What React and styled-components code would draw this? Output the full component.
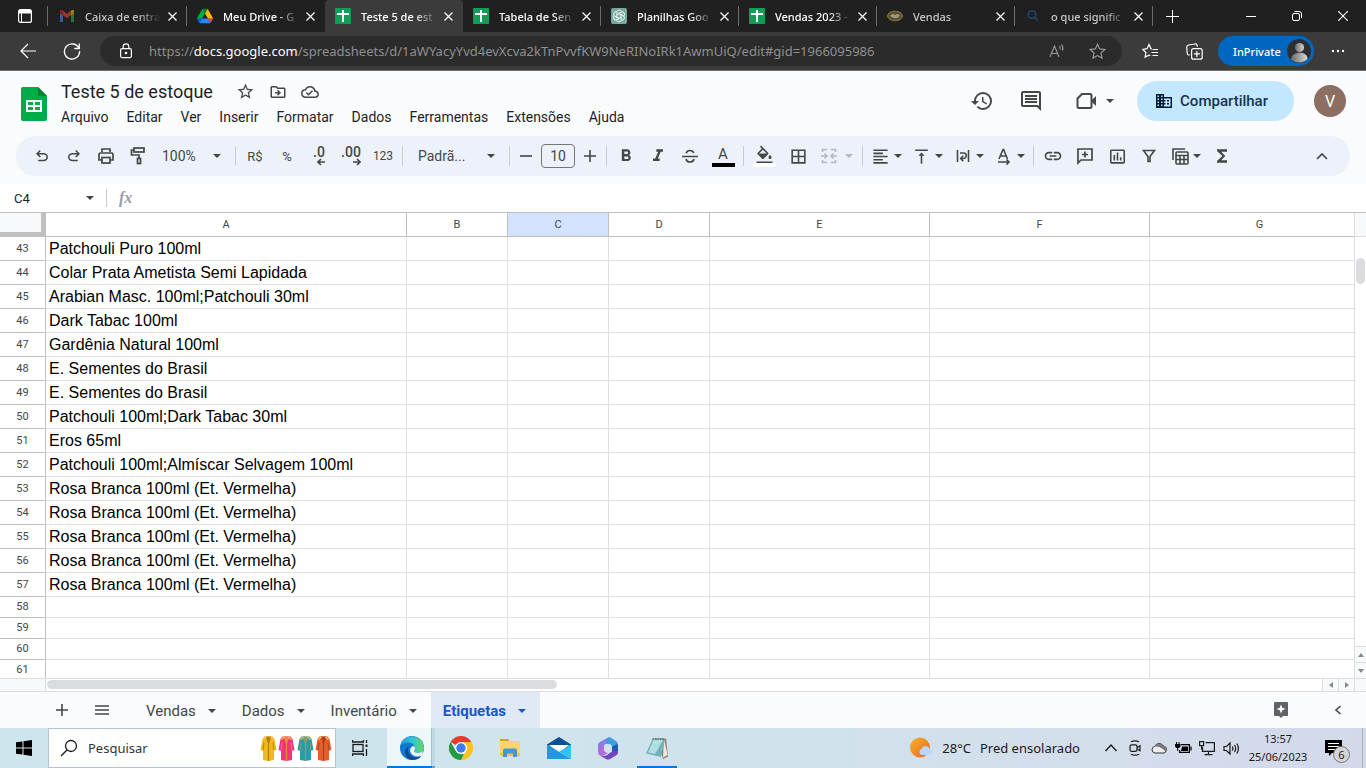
import React from 'react';
import styled, { createGlobalStyle, css } from 'styled-components';
// icons
import {
  MdStarBorder, MdOutlineDriveFileMove, MdOutlineCloudDone, MdHistory, MdOutlineComment,
  MdBorderAll, MdFormatAlignLeft, MdVerticalAlignTop, MdLink, MdInsertChartOutlined,
  MdFunctions, MdFormatBold, MdFormatItalic, MdFormatColorFill,
} from 'react-icons/md';

const GlobalStyle = createGlobalStyle`
* {
  box-sizing: border-box;
}
body {
  margin: 0;
  overflow: hidden;
  background: #fff;
  font-family: Roboto, "Liberation Sans", sans-serif;
}
button, input, select {
  font-family: inherit;
  color: inherit;
  border: 0;
  margin: 0;
  padding: 0;
  background: none;
  outline: none;
}
svg {
  display: block;
  flex: none;
}
`;

// data
const tabs = [
  { title: 'Caixa de entra', icon: 'gmail', dim: true },
  { title: 'Meu Drive - G', icon: 'drive' },
  { title: 'Teste 5 de est', icon: 'sheets', active: true },
  { title: 'Tabela de Sen', icon: 'sheets' },
  { title: 'Planilhas Goo', icon: 'gpt' },
  { title: 'Vendas 2023 -', icon: 'sheets' },
  { title: 'Vendas', icon: 'coin', dim: true },
  { title: 'o que signific', icon: 'bing', dim: true },
];

const menus = ['Arquivo', 'Editar', 'Ver', 'Inserir', 'Formatar', 'Dados', 'Ferramentas', 'Extensões', 'Ajuda'];

const columns = [
  { name: 'A', width: 361 },
  { name: 'B', width: 101 },
  { name: 'C', width: 101 },
  { name: 'D', width: 101 },
  { name: 'E', width: 220 },
  { name: 'F', width: 220 },
  { name: 'G', width: 220 },
];

const products = [
  'Patchouli Puro 100ml',
  'Colar Prata Ametista Semi Lapidada',
  'Arabian Masc. 100ml;Patchouli 30ml',
  'Dark Tabac 100ml',
  'Gardênia Natural 100ml',
  'E. Sementes do Brasil',
  'E. Sementes do Brasil',
  'Patchouli 100ml;Dark Tabac 30ml',
  'Eros 65ml',
  'Patchouli 100ml;Almíscar Selvagem 100ml',
  'Rosa Branca 100ml (Et. Vermelha)',
  'Rosa Branca 100ml (Et. Vermelha)',
  'Rosa Branca 100ml (Et. Vermelha)',
  'Rosa Branca 100ml (Et. Vermelha)',
  'Rosa Branca 100ml (Et. Vermelha)',
  '', '', '', '',
];

const sheets = ['Vendas', 'Dados', 'Inventário', 'Etiquetas'];

// small drawings
const Arrow = () => (
  <svg width="8" height="4" viewBox="0 0 8 4"><path d="M0 0h8L4 4z" fill="currentColor" /></svg>
);

const Symbol = ({ d, size = 20 }) => (
  <svg width={size} height={size} viewBox="0 -960 960 960" fill="currentColor"><path d={d} /></svg>
);

const Line = ({ size = 20, box = 20, width = 2, children }) => (
  <svg width={size} height={size} viewBox={`0 0 ${box} ${box}`} fill="none" stroke="currentColor" strokeWidth={width}>
    {children}
  </svg>
);

const Close = () => (
  <Line size={9} box={9} width={1.2}><path d="M.5.5l8 8M8.5.5l-8 8" /></Line>
);

const Favicon = ({ name }) => {
  switch (name) {
    case 'gmail':
      return (
        <svg width="16" height="16" viewBox="0 0 16 16" opacity="0.6">
          <path d="M1 3.5V14h3V7z" fill="#4285f4" />
          <path d="M15 3.5V14h-3V7z" fill="#34a853" />
          <path d="M1 3.5c0-1.500 1.500-2 2.500-1.200L8 5.700l4.500-3.400C13.500 1.500 15 2 15 3.500V5L8 10.200 1 5z" fill="#ea4335" />
          <path d="M12 2.700v4.700l3-2.300V3.400c0-1.400-1.800-1.800-3-.7z" fill="#fbbc04" />
          <path d="M4 2.700v4.700L1 5.100V3.400C1 2 2.800 1.600 4 2.700z" fill="#c5221f" />
        </svg>
      );
    case 'drive':
      return (
        <svg width="16" height="16" viewBox="0 0 87.300 78">
          <path d="m6.600 66.850 3.850 6.650c.8 1.400 1.950 2.500 3.300 3.300l13.750-23.800h-27.500c0 1.550.4 3.100 1.200 4.500z" fill="#0066da" />
          <path d="m43.650 25-13.750-23.800c-1.350.8-2.500 1.900-3.300 3.300l-25.400 44a9.060 9.060 0 0 0 -1.200 4.500h27.500z" fill="#00ac47" />
          <path d="m73.550 76.800c1.350-.8 2.500-1.900 3.300-3.300l1.600-2.750 7.650-13.250c.8-1.400 1.200-2.950 1.200-4.500h-27.500l5.850 11.500z" fill="#ea4335" />
          <path d="m43.650 25 13.750-23.800c-1.350-.8-2.900-1.200-4.500-1.200h-18.500c-1.600 0-3.150.45-4.500 1.200z" fill="#00832d" />
          <path d="m59.800 53h-32.300l-13.750 23.800c1.350.8 2.900 1.200 4.500 1.200h50.800c1.600 0 3.150-.45 4.500-1.200z" fill="#2684fc" />
          <path d="m73.400 26.500-12.700-22c-.8-1.400-1.950-2.500-3.300-3.300l-13.750 23.800 16.150 28h27.450c0-1.550-.4-3.100-1.200-4.500z" fill="#ffba00" />
        </svg>
      );
    case 'sheets':
      return (
        <svg width="16" height="16" viewBox="0 0 16 16">
          <rect width="16" height="16" rx="1" fill="#0f9d58" />
          <path d="M7 2h2v3h5v2H9v7H7V7H2V5h5z" fill="#fff" />
        </svg>
      );
    case 'gpt':
      return (
        <svg width="16" height="16" viewBox="0 0 16 16">
          <rect width="16" height="16" rx="2" fill="#75a99c" />
          <g fill="none" stroke="#fff" strokeWidth="0.9">
            {[0, 60, 120, 180, 240, 300].map((a) => (
              <path key={a} transform={`rotate(${a} 8 8)`} d="M8 5.600L5.800 6.900V4.300C5.800 1.800 9.500 1.300 10.300 3.600" />
            ))}
          </g>
        </svg>
      );
    case 'coin':
      return (
        <svg width="16" height="16" viewBox="0 0 16 16">
          <ellipse cx="8" cy="8" rx="7.500" ry="4.800" fill="#5c5230" stroke="#8a7b35" />
          <path d="M3 7.500l3-1.500 2 1 3-1 2 1.500-2 2-3 .8-3-1z" fill="#9b9a90" />
        </svg>
      );
    default:
      return (
        <svg width="16" height="16" viewBox="0 0 16 16" fill="none" stroke="#1b4874" strokeWidth="1.600">
          <circle cx="7" cy="6.500" r="3.700" />
          <path d="M9.700 9.200L13 12.800" />
        </svg>
      );
  }
};

const UNDO = 'M280-200v-80h284q63 0 109.500-40T720-420q0-60-46.500-100T564-560H312l104 104-56 56-200-200 200-200 56 56-104 104h252q97 0 166.500 63T800-420q0 94-69.500 157T564-200H280Z';
const REDO = 'M396-200q-97 0-166.500-63T160-420q0-94 69.500-157T396-640h252L544-744l56-56 200 200-200 200-56-56 104-104H396q-63 0-109.500 40T240-420q0 60 46.500 100T396-280h284v80H396Z';

function App() {
  return (
    <Page>
      <GlobalStyle />
      <BrowserTabs />
      <AddressBar />
      <DocHeader />
      <Toolbar />
      <FormulaBar />
      <Grid />
      <SheetTabs />
      <Taskbar />
    </Page>
  );
}

function BrowserTabs() {
  return (
    <TabStrip>
      <TabMenu aria-label="Menu de guias">
        <svg width="14" height="14" viewBox="0 0 14 14">
          <rect x="0.600" y="0.600" width="12.800" height="12.800" rx="2" fill="none" stroke="#fff" strokeWidth="1.200" />
          <path d="M1 1h12v3.500H1z" fill="#fff" />
          <path d="M3.500 4v9" stroke="#fff" strokeWidth="1" />
        </svg>
      </TabMenu>
      {tabs.map((tab, i) => (
        <Tab key={tab.title} $active={tab.active} $line={!tab.active && i !== 1}>
          <Favicon name={tab.icon} />
          <TabTitle $dim={tab.dim}>{tab.title}</TabTitle>
          <TabClose aria-label="Fechar guia"><Close /></TabClose>
        </Tab>
      ))}
      <NewTab aria-label="Nova guia">
        <Line size={13} box={13} width={1}><path d="M6.500 0v13M0 6.500h13" /></Line>
      </NewTab>
      <WindowButtons>
        <WindowButton aria-label="Minimizar">
          <Line size={10} box={10} width={1}><path d="M0 5.500h10" /></Line>
        </WindowButton>
        <WindowButton aria-label="Restaurar">
          <Line size={10} box={10} width={1}>
            <rect x="0.500" y="2.500" width="7" height="7" rx="1.500" />
            <path d="M2.500.5h4.500a2.500 2.500 0 0 1 2.500 2.500v4" />
          </Line>
        </WindowButton>
        <WindowButton aria-label="Fechar">
          <Line size={10} box={10} width={1.100}><path d="M0 0l10 10M10 0L0 10" /></Line>
        </WindowButton>
      </WindowButtons>
    </TabStrip>
  );
}

function AddressBar() {
  return (
    <NavBar>
      <NavButton aria-label="Voltar">
        <Line size={16} box={16} width={1.200}><path d="M16 8H1M8 1L1 8l7 7" /></Line>
      </NavButton>
      <NavButton aria-label="Atualizar">
        <Line size={18} box={18} width={1.300}><path d="M16 6.500A7.600 7.600 0 1 0 16.600 9M16.300 1.500v5h-5" /></Line>
      </NavButton>
      <Address>
        <Line size={16} box={16} width={1.200}>
          <rect x="2.600" y="5.600" width="10.800" height="9" rx="1.500" />
          <path d="M5.200 5.500V3.600a2.800 2.800 0 0 1 5.600 0v1.900" />
          <circle cx="8" cy="10" r="0.700" fill="currentColor" />
        </Line>
        <Url role="textbox" aria-label="Endereço">
          https://<b>docs.google.com</b>/spreadsheets/d/1aWYacyYvd4evXcva2kTnPvvfKW9NeRINoIRk1AwmUiQ/edit#gid=1966095986
        </Url>
        <AddressButton aria-label="Ler em voz alta">
          <Line size={16} box={16} width={1.100}>
            <path d="M1 14L5.500 3 10 14M2.600 10.500h5.800M10.300 3q1.400 1.500.7 3.500M12.500 1.500q2.200 2.800 1 6" />
          </Line>
        </AddressButton>
        <AddressButton aria-label="Adicionar aos favoritos">
          <Line size={17} box={17} width={1.100}>
            <path d="M8.500 1.200l2.200 4.700 5.100.6-3.800 3.500 1 5.100-4.500-2.500L4 15.100l1-5.100L1.200 6.500l5.100-.6z" />
          </Line>
        </AddressButton>
      </Address>
      <NavButton aria-label="Favoritos">
        <Line size={17} box={17} width={1.200}>
          <path d="M9.800 5.800H9L7 1.500 5 5.700l-4.300.7 3.200 3.100-.8 4.600 3.900-2 1.300.7M10.500 6.500H16M9.500 9.500H16M10.500 12.500H16" />
        </Line>
      </NavButton>
      <NavButton aria-label="Coleções">
        <Line size={17} box={17} width={1.200}>
          <rect x="5.600" y="5.600" width="10.600" height="10.600" rx="2" />
          <path d="M10.900 8v6M8 10.900h6M3.800 11.900L3 12a2 2 0 0 1-1.800-1.800L.8 4a2 2 0 0 1 1.700-2L9 1a2 2 0 0 1 2.200 1.600l.1 1.200" />
        </Line>
      </NavButton>
      <Private>
        InPrivate
        <svg width="24" height="24" viewBox="0 0 24 24">
          <defs>
            <linearGradient id="person" x1="0" x2="1">
              <stop offset="0" stopColor="#6b6b6b" />
              <stop offset="1" stopColor="#d9d5d2" />
            </linearGradient>
          </defs>
          <circle cx="12" cy="12" r="12" fill="#2f2f33" />
          <circle cx="12.500" cy="8.500" r="4.500" fill="url(#person)" />
          <path d="M4 20.500c0-9 17-9 16.500-.5a12 12 0 0 1-16.500.5z" fill="url(#person)" />
        </svg>
      </Private>
      <NavButton aria-label="Configurações e mais">
        <svg width="14" height="4" viewBox="0 0 14 4" fill="#fff">
          <circle cx="2" cy="2" r="1.200" /><circle cx="7" cy="2" r="1.200" /><circle cx="12" cy="2" r="1.200" />
        </svg>
      </NavButton>
    </NavBar>
  );
}

function DocHeader() {
  return (
    <Header>
      <svg width="26" height="34" viewBox="0 0 26 34">
        <path d="M2 0h15l9 9v23a2 2 0 0 1-2 2H2a2 2 0 0 1-2-2V2a2 2 0 0 1 2-2z" fill="#00ac47" />
        <path d="M17 0l9 9h-9z" fill="#00832d" />
        <path fillRule="evenodd" fill="#fff" d="M5 13h16v12H5zM7 15v3h5v-3zM14 15v3h5v-3zM7 20v3h5v-3zM14 20v3h5v-3z" />
      </svg>
      <TitleBlock>
        <TitleRow>
          <Title>Teste 5 de estoque</Title>
          <TitleButton aria-label="Marcar com estrela"><MdStarBorder size={19} /></TitleButton>
          <TitleButton aria-label="Mover"><MdOutlineDriveFileMove size={18} /></TitleButton>
          <TitleButton aria-label="Status do documento"><MdOutlineCloudDone size={18} /></TitleButton>
        </TitleRow>
        <Menus>
          {menus.map((menu) => <MenuButton key={menu}>{menu}</MenuButton>)}
        </Menus>
      </TitleBlock>
      <Actions>
        <ActionButton aria-label="Histórico de versões"><MdHistory size={24} /></ActionButton>
        <ActionButton aria-label="Comentários"><MdOutlineComment size={24} /></ActionButton>
        <ActionButton aria-label="Participar de uma chamada" $wide>
          <svg width="24" height="24" viewBox="0 0 24 24">
            <path d="M8 5h8a1.500 1.500 0 0 1 1.500 1.500v11A1.500 1.500 0 0 1 16 19H5a1.500 1.500 0 0 1-1.500-1.500v-8z" fill="none" stroke="#444746" strokeWidth="2" strokeLinejoin="round" />
            <path d="M18 11l4-4v10l-4-4z" fill="#444746" />
          </svg>
          <Arrow />
        </ActionButton>
        <Share>
          <svg width="16" height="14" viewBox="0 0 16 14">
            <path fillRule="evenodd" fill="#001d35" d="M0 0h8v3h8v11H0zM1.500 1.500v1.500H3V1.500zM5 1.500v1.500h1.500V1.500zM1.500 4.500V6H3V4.500zM5 4.500V6h1.500V4.500zM1.500 7.500V9H3V7.500zM5 7.500V9h1.500V7.500zM1.500 10.500V12H3v-1.500zM5 10.500V12h1.500v-1.500zM8 4.500V6h1.500v1.500H8V9h1.500v1.500H8v2h6.500v-8zM11 6h2v1.500h-2zM11 9h2v1.500h-2z" />
          </svg>
          Compartilhar
        </Share>
        <Avatar aria-label="Conta">V</Avatar>
      </Actions>
    </Header>
  );
}

function Toolbar() {
  return (
    <ToolbarWrap>
      <Tools>
        <Tool aria-label="Desfazer"><Symbol d={UNDO} size={18} /></Tool>
        <Tool aria-label="Refazer"><Symbol d={REDO} size={18} /></Tool>
        <Tool aria-label="Imprimir">
          <Line size={18} box={18} width={1.700}>
            <path d="M5 5V2h8v3M5 13H2V7.500A1.500 1.500 0 0 1 3.500 6h11A1.500 1.500 0 0 1 16 7.500V13h-3" />
            <rect x="5" y="10.500" width="8" height="5.500" />
          </Line>
        </Tool>
        <Tool aria-label="Pintar formatação">
          <Line size={18} box={18} width={1.700}>
            <rect x="5" y="1" width="10" height="4" />
            <path d="M5 3H2.500v5H10v3.500" />
            <rect x="8.500" y="11.500" width="3" height="5" />
          </Line>
        </Tool>
        <Picker $width={78}>
          <select aria-label="Zoom" defaultValue="100"><option value="100">100%</option></select>
          <Arrow />
        </Picker>
        <Divider />
        <Tool aria-label="Moeda">R$</Tool>
        <Tool aria-label="Porcentagem">%</Tool>
        <Tool aria-label="Diminuir casas decimais">
          <Decimal>.0<Line size={8} box={8} width={1.600}><path d="M8 4H1M4 1L1 4l3 3" /></Line></Decimal>
        </Tool>
        <Tool aria-label="Aumentar casas decimais">
          <Decimal>.00<Line size={8} box={8} width={1.600}><path d="M0 4h7M4 1l3 3-3 3" /></Line></Decimal>
        </Tool>
        <Tool aria-label="Mais formatos" $small>123</Tool>
        <Divider />
        <Picker $width={100}>
          <select aria-label="Fonte" defaultValue="p"><option value="p">Padrã...</option></select>
          <Arrow />
        </Picker>
        <Divider />
        <Tool aria-label="Diminuir tamanho" $width={26}>
          <Line size={12} box={12} width={1.600}><path d="M0 6h12" /></Line>
        </Tool>
        <FontSize aria-label="Tamanho da fonte" defaultValue="10" />
        <Tool aria-label="Aumentar tamanho" $width={26}>
          <Line size={12} box={12} width={1.600}><path d="M0 6h12M6 0v12" /></Line>
        </Tool>
        <Divider />
        <Tool aria-label="Negrito"><MdFormatBold size={20} /></Tool>
        <Tool aria-label="Itálico"><MdFormatItalic size={20} /></Tool>
        <Tool aria-label="Tachado">
          <Line size={18} box={18} width={1.700}>
            <path d="M1 9.500h16M12.800 6Q12 3.500 9 3.500T5.200 6.200M5 12q.6 3 4 3t4-3" />
          </Line>
        </Tool>
        <Tool aria-label="Cor do texto" $width={34}><ColorMark $color="#000">A</ColorMark></Tool>
        <Divider />
        <Tool aria-label="Cor de preenchimento" $width={34}>
          <ColorMark $color="#fff"><MdFormatColorFill size={19} viewBox="0 0 24 20" /></ColorMark>
        </Tool>
        <Tool aria-label="Bordas" $width={34}><MdBorderAll size={19} /></Tool>
        <Tool aria-label="Mesclar células" $width={44} $off>
          <Line size={16} box={16} width={1.600}>
            <path d="M6 1.500H1.500V4M1.500 12v2.500H6M10 1.500h4.500V4M14.500 12v2.500H10M0 8h5.500M3.500 5.500L6 8l-2.500 2.500M16 8h-5.500M12.500 5.500L10 8l2.500 2.500" />
          </Line>
          <Arrow />
        </Tool>
        <Divider />
        <Tool aria-label="Alinhamento horizontal" $width={41}><MdFormatAlignLeft size={19} /><Arrow /></Tool>
        <Tool aria-label="Alinhamento vertical" $width={41}><MdVerticalAlignTop size={19} /><Arrow /></Tool>
        <Tool aria-label="Ajuste de texto" $width={41}>
          <Line size={18} box={18} width={1.600}>
            <path d="M3.500 3v12M14.500 3v12M6 6h3.500a2.500 2.500 0 0 1 0 5.500H7M9.200 8.800L6.700 11.500l2.500 2.700" />
          </Line>
          <Arrow />
        </Tool>
        <Tool aria-label="Rotação de texto" $width={41}>
          <Line size={18} box={18} width={1.600}>
            <path d="M4 12L8 2.500h.6L12.500 12M5.300 9h6M3 15h11M11.500 12.500L14 15l-2.500 2.500" />
          </Line>
          <Arrow />
        </Tool>
        <Divider />
        <Tool aria-label="Inserir link"><MdLink size={20} /></Tool>
        <Tool aria-label="Inserir comentário">
          <Line size={18} box={18} width={1.700}>
            <path d="M2 16V2h14v11H5zM9 4.500v6M6 7.500h6" />
          </Line>
        </Tool>
        <Tool aria-label="Inserir gráfico"><MdInsertChartOutlined size={19} /></Tool>
        <Tool aria-label="Criar filtro">
          <Line size={18} box={18} width={1.600}><path d="M3.500 3.500h11L10 9.500v5H8v-5z" /></Line>
        </Tool>
        <Tool aria-label="Visualizações com filtro" $width={41}>
          <Line size={18} box={18} width={1.600}>
            <path d="M2 13V2h12M5 8.500h12M5 12.500h12M9 8.500V17M13 8.500V17" />
            <rect x="5" y="5" width="12" height="12" rx="1" />
          </Line>
          <Arrow />
        </Tool>
        <Tool aria-label="Funções"><MdFunctions size={20} /></Tool>
        <CollapseTool aria-label="Ocultar menus">
          <Line size={12} box={12} width={1.600}><path d="M1 9l5-5 5 5" /></Line>
        </CollapseTool>
      </Tools>
    </ToolbarWrap>
  );
}

function FormulaBar() {
  return (
    <Formula>
      <NameBox aria-label="Caixa de nome" defaultValue="C4" />
      <NameArrow aria-label="Intervalos nomeados"><Arrow /></NameArrow>
      <FormulaLabel htmlFor="formula">fx</FormulaLabel>
      <FormulaInput id="formula" />
    </Formula>
  );
}

function Grid() {
  return (
    <GridArea>
      <SheetView>
        <Table>
          <colgroup>
            <Col $width={46} />
            {columns.map((col) => <Col key={col.name} $width={col.width} />)}
          </colgroup>
          <thead>
            <tr>
              <Corner aria-label="Selecionar tudo" />
              {columns.map((col) => (
                <ColumnHead key={col.name} scope="col" $selected={col.name === 'C'}>{col.name}</ColumnHead>
              ))}
            </tr>
          </thead>
          <tbody>
            {products.map((product, i) => (
              <Row key={i} $empty={!product}>
                <RowHead scope="row">{i + 43}</RowHead>
                {columns.map((col) => <Cell key={col.name}>{col.name === 'A' ? product : ''}</Cell>)}
              </Row>
            ))}
          </tbody>
        </Table>
      </SheetView>
      <VerticalScroll>
        <ScrollCap />
        <VerticalTrack><VerticalThumb /></VerticalTrack>
        <ScrollButton aria-label="Rolar para cima"><Triangle /></ScrollButton>
        <ScrollButton aria-label="Rolar para baixo"><Triangle $turn={180} /></ScrollButton>
      </VerticalScroll>
      <HorizontalScroll>
        <HorizontalCap />
        <HorizontalTrack><HorizontalThumb /></HorizontalTrack>
        <ScrollButton aria-label="Rolar para a esquerda" $side><Triangle $turn={-90} /></ScrollButton>
        <ScrollButton aria-label="Rolar para a direita" $side><Triangle $turn={90} /></ScrollButton>
      </HorizontalScroll>
      <ScrollCorner />
    </GridArea>
  );
}

function SheetTabs() {
  return (
    <SheetBar>
      <SheetTool aria-label="Adicionar página">
        <Line size={12} box={12} width={1.600}><path d="M0 6h12M6 0v12" /></Line>
      </SheetTool>
      <SheetTool aria-label="Todas as páginas">
        <Line size={14} box={14} width={1.600}><path d="M0 3h14M0 7h14M0 11h14" /></Line>
      </SheetTool>
      <SheetList>
        {sheets.map((sheet) => (
          <SheetTab key={sheet} $active={sheet === 'Etiquetas'}>{sheet}<Arrow /></SheetTab>
        ))}
      </SheetList>
      <SheetEnd>
        <SheetTool aria-label="Explorar">
          <svg width="14" height="16" viewBox="0 0 14 16">
            <path d="M1 0h12a1 1 0 0 1 1 1v12a1 1 0 0 1-1 1H9l-2 2-2-2H1a1 1 0 0 1-1-1V1a1 1 0 0 1 1-1z" fill="#5f6368" />
            <path d="M7 2.500l1.300 3.200L11.500 7 8.300 8.300 7 11.500 5.700 8.300 2.500 7l3.200-1.300z" fill="#fff" />
          </svg>
        </SheetTool>
        <SheetTool aria-label="Mostrar painel lateral">
          <Line size={10} box={10} width={1.600}><path d="M7.500 1l-4.500 4 4.500 4" /></Line>
        </SheetTool>
      </SheetEnd>
    </SheetBar>
  );
}

const Coat = ({ color, dark, x }) => (
  <g transform={`translate(${x} 0)`}>
    <path d="M4.500 1.500L2.500 4 .5 15l2.500.8V25l5.500 1 5.500-1v-9.200l2.500-.8-2-11-2-2.500z" fill={color} />
    <path d="M4 7.500L3.200 15M13 7.500l.8 7.500" stroke={dark} strokeWidth="1" />
    <path d="M8.500 8v18" stroke={dark} strokeWidth="1.200" />
    <path d="M5.500 1.500L8.500 10l3-8.500" fill={dark} />
    <path d="M3.500 4.500l3-2.500M10.500 2l3 2.500" stroke="#f5c64c" strokeWidth="1.200" />
  </g>
);

function Taskbar() {
  return (
    <TaskbarWrap>
      <StartButton aria-label="Iniciar">
        <svg width="16" height="16" viewBox="0 0 16 16">
          <path d="M0 2.300L6.500 1.400v6.100H0zM7.500 1.200L16 0v7.500H7.500zM0 8.500h6.500v6.100L0 13.700zM7.500 8.500H16V16l-8.500-1.200z" />
        </svg>
      </StartButton>
      <Search>
        <Line size={18} box={18} width={1.300}><circle cx="11" cy="7" r="5.500" /><path d="M7.200 10.800L1 17" /></Line>
        <input aria-label="Pesquisar" placeholder="Pesquisar" />
        <svg width="73" height="27" viewBox="0 0 73 27">
          <Coat x={0} color="#f0b91c" dark="#b97c10" />
          <Coat x={18} color="#f0357a" dark="#e88a3c" />
          <Coat x={37} color="#2e9aa5" dark="#8aa06a" />
          <Coat x={55} color="#e2602c" dark="#b43e1c" />
        </svg>
      </Search>
      <TaskView aria-label="Visão de tarefas">
        <Line size={16} box={16} width={1.300}>
          <rect x="1" y="4.500" width="10" height="7" />
          <path d="M.6 0v2h10.800V0M.6 16v-2h10.800v2M14.500 0v3M14.500 9v7" />
          <rect x="13.500" y="4.500" width="2" height="2.500" fill="currentColor" stroke="none" />
        </Line>
      </TaskView>
      <ActiveTask aria-label="Microsoft Edge">
        <svg width="24" height="24" viewBox="0 0 24 24">
          <defs>
            <linearGradient id="edgeTop" x1="0" x2="1" y1="0.300" y2="0.300">
              <stop offset="0" stopColor="#1e9de0" />
              <stop offset="0.500" stopColor="#32c4d8" />
              <stop offset="1" stopColor="#63d957" />
            </linearGradient>
          </defs>
          <circle cx="12" cy="12" r="12" fill="#0f78cf" />
          <path d="M.3 10A12 12 0 0 1 24 11.500c0 4-3 5.500-6 5.500-2.500 0-4-1-4-2 0-.8 1-1.300 1-3 0-2.500-2.500-5.500-7-5.500C4 6.500 1.500 8 .3 10z" fill="url(#edgeTop)" />
          <path d="M9 10c-3 5 1 11.500 7 11.500 2.500 0 4.500-1 6-2.500-4 6.500-13 6.500-16 1-2-4-1-8 3-10z" fill="#114a8b" />
          <path d="M15 12c0 1.700-1 2.200-1 3 0 1 1.500 2 4 2 2 0 3.800-.6 4.900-1.900L22.300 19c-4 3-10.300 1.500-11.800-3-.9-2.800.5-5.500 2.500-6 1.200.3 2 1 2 2z" fill="#f2f9fb" />
        </svg>
      </ActiveTask>
      <Task aria-label="Google Chrome">
        <svg width="24" height="24" viewBox="0 0 24 24">
          <path d="M12 12L1.600 6A12 12 0 0 1 22.400 6z" fill="#e33b2e" />
          <path d="M12 12V6h10.400A12 12 0 0 1 12 24l5.200-9z" fill="#fcc31e" />
          <path d="M1.600 6l5.200 9L12 18l3 .2L12 24A12 12 0 0 1 1.600 6z" fill="#249a41" />
          <circle cx="12" cy="12" r="6" fill="#fff" />
          <circle cx="12" cy="12" r="4.700" fill="#3b7ded" />
        </svg>
      </Task>
      <Task aria-label="Explorador de Arquivos">
        <svg width="22" height="20" viewBox="0 0 22 20">
          <path d="M1 1h8l2 2h10v14H1z" fill="#fbd56b" />
          <path d="M1 1h8l1.500 2H1z" fill="#dc9f25" />
          <path d="M1 15h20v3H1z" fill="#f3c34c" />
          <path d="M4 19v-7a1.500 1.500 0 0 1 1.500-1.500h11A1.500 1.500 0 0 1 18 12v7h-4v-3.500H8V19z" fill="#4398d3" />
        </svg>
      </Task>
      <Task aria-label="Email">
        <svg width="24" height="22" viewBox="0 0 24 22">
          <path d="M0 7.500L12 0l12 7.500V14H0z" fill="#0f4f96" />
          <path d="M2 8h20l-10 8z" fill="#fff" />
          <path d="M0 7.500L24 22H0z" fill="#1e9ae2" />
          <path d="M24 7.500V22L12 14.700z" fill="#36c0f3" />
        </svg>
      </Task>
      <Task aria-label="Microsoft 365">
        <svg width="22" height="23" viewBox="0 0 22 23">
          <path d="M11 .5L3 5Q1 6 1 8v7l6-3V9.500q0-2 2-3l5-2.500z" fill="#8b7be8" />
          <path d="M11 .5q1.500-.6 3 .2L19 4q2 1 2 3.500V15l-6-3V9.500q0-1.500-1.500-2.200L8.500 6.700z" fill="#3b9fe0" />
          <path d="M21 12v3.500q0 2-2 3L13 22q-2 1-4 0l-6-3.500 4 .5q1.500 0 3-1l5-3.500V9z" fill="#7547bf" />
          <path d="M1 11v4.500q0 2 2 3t4-.2l4-2.300q-4-.5-4-3.500V8z" fill="#b06fdd" />
          <path d="M15 9.500L21 7v6q0 2-3 1.500t-3-2.500z" fill="#2b55b8" />
        </svg>
      </Task>
      <Task aria-label="Bloco de Notas" $open>
        <svg width="24" height="24" viewBox="0 0 24 24">
          <path d="M8 2.500h13l2 18-5 2.500-1-3z" fill="#8d7f73" />
          <path d="M19 3l3.500 16-4.500 2.500z" fill="#efe9e0" />
          <path d="M7.500 3H20l-4 18-15-3.500z" fill="#6fb3bf" />
          <path d="M8.500 4H18l-8 14-7-1.500z" fill="#b4dde2" />
          <path d="M7.500 3H20" stroke="#6c6a66" strokeWidth="1.500" strokeDasharray="1.500 1" />
        </svg>
      </Task>
      <Tray>
        <Weather>
          <svg width="23" height="22" viewBox="0 0 23 22">
            <defs>
              <linearGradient id="sun" x1="0" x2="1" y2="1">
                <stop offset="0" stopColor="#f6b42c" />
                <stop offset="1" stopColor="#e8641b" />
              </linearGradient>
            </defs>
            <circle cx="10" cy="10.500" r="10" fill="url(#sun)" />
            <path d="M11.500 18a3.200 3.200 0 0 1 0-6 4.300 4.300 0 0 1 8-.5 3.300 3.300 0 0 1 0 6.500z" fill="#bcd6fa" />
          </svg>
          <span>28°C</span>
          <span>Pred ensolarado</span>
        </Weather>
        <TrayButton aria-label="Ícones ocultos">
          <Line size={12} box={12} width={1.400}><path d="M.5 9L6 3l5.500 6" /></Line>
        </TrayButton>
        <TrayButton aria-label="Reunir agora">
          <Line size={16} box={16} width={1.200}>
            <rect x="3" y="4.800" width="7" height="6.500" rx="1.500" />
            <path d="M10 7.500l3-1.800v5l-3-1.800M4 1.800Q8 0 12 1.800M4 14.200Q8 16 12 14.200" />
          </Line>
        </TrayButton>
        <TrayButton aria-label="OneDrive">
          <svg width="17" height="12" viewBox="0 0 17 12">
            <path d="M4 11a3.300 3.300 0 0 1-.4-6.500A5 5 0 0 1 12.500 4 3.600 3.600 0 0 1 13 11z" fill="#eee" stroke="#333" />
            <path d="M4 4.500q4-.5 7 2l4 3a3.500 3.500 0 0 0-2.500-5.500A5 5 0 0 0 4 4.500z" fill="#777" />
          </svg>
        </TrayButton>
        <TrayButton aria-label="Bateria">
          <svg width="17" height="12" viewBox="0 0 17 12">
            <path d="M6 2.600h8.400v7.800H4.600V8M16 4.500v4" fill="none" stroke="#000" strokeWidth="1.200" />
            <path d="M7 4.500h6v4.500H6z" />
            <path d="M0 2h5.500v2.500L4 6H1.500L0 4.500zM1 0h1v2H1zM3.500 0h1v2h-1zM2.200 6h1v3h-1z" />
          </svg>
        </TrayButton>
        <TrayButton aria-label="Rede">
          <Line size={16} box={16} width={1.200}>
            <path d="M6.500 2.600H15.400v8.800H3.500V7M9.500 11.500v3M5.500 14.600h8" />
            <rect x="0.600" y="1.600" width="4" height="4" />
            <path d="M2.600 5.500v4" />
          </Line>
        </TrayButton>
        <TrayButton aria-label="Volume">
          <Line size={17} box={17} width={1.200}>
            <path d="M1 6.500h2.500L7 3v11l-3.500-3.500H1zM9.300 6.500q1.200 2 0 4M11.500 5q2.300 3.500 0 7M13.800 3.500q3.300 5 0 10" />
          </Line>
        </TrayButton>
        <Clock><span>13:57</span><span>25/06/2023</span></Clock>
        <Notifications aria-label="6 notificações">
          <svg width="17" height="16" viewBox="0 0 17 16">
            <path d="M0 0h17v13H7l-3 3v-3H0z" />
            <path d="M3 3.500h11M3 6.500h11M3 9.500h7" stroke="#fff" strokeWidth="1" />
          </svg>
          <Badge>6</Badge>
        </Notifications>
      </Tray>
    </TaskbarWrap>
  );
}

// layout
const Page = styled.div`
display: flex;
flex-direction: column;
height: 100vh;
color: #444746;
`

const centered = css`
display: flex;
align-items: center;
justify-content: center;
`

const edgeFont = css`
font-family: "Noto Sans", "Open Sans", sans-serif;
`

// browser
const TabStrip = styled.div`
display: flex;
height: 32px;
flex: none;
background: #202020;
color: #fff;
${edgeFont}
`
const TabMenu = styled.button`
${centered}
width: 49px;
background: linear-gradient(#6b6b6b, #6b6b6b) 47px 50% / 1px 20px no-repeat;
`
const Tab = styled.div`
display: flex;
align-items: center;
flex: 0 1 138px;
min-width: 0;
padding: 0 10px;
border-radius: 4px 4px 0 0;
background: ${props => props.$active ? '#3b3b3b' : props.$line ? 'linear-gradient(#6b6b6b, #6b6b6b) 100% 50% / 1px 20px no-repeat' : 'none'};
`
const TabTitle = styled.span`
flex: 1;
min-width: 0;
margin-left: 10px;
white-space: nowrap;
font-size: 11px;
font-weight: 500;
color: ${props => props.$dim ? '#c8c8c8' : '#fff'};
mask-image: linear-gradient(90deg, #000 70%, transparent);
`
const TabClose = styled.button`
${centered}
width: 22px;
height: 24px;
margin-right: -6px;
`
const NewTab = styled.button`
${centered}
width: 38px;
`
const WindowButtons = styled.div`
display: flex;
margin-left: auto;
`
const WindowButton = styled.button`
${centered}
width: 46px;
`
const NavBar = styled.div`
display: flex;
align-items: center;
height: 39px;
flex: none;
padding: 0 6px;
background: #3b3b3b;
border-bottom: 1px solid #6e6e6e;
color: #fff;
${edgeFont}
`
const NavButton = styled.button`
${centered}
width: 44px;
height: 30px;
`
const Address = styled.div`
display: flex;
align-items: center;
flex: 1;
min-width: 0;
height: 30px;
margin: 0 6px;
padding: 0 5px 0 18px;
border-radius: 15px;
background: #2b2b2b;
`
const Url = styled.div`
flex: 1;
min-width: 0;
margin-left: 15px;
overflow: hidden;
white-space: nowrap;
font-size: 13px;
color: #8f8f8f;
b {
  font-weight: 400;
  color: #fff;
}
`
const AddressButton = styled.button`
${centered}
width: 40px;
height: 30px;
color: #9b9b9b;
`
const Private = styled.button`
display: flex;
align-items: center;
justify-content: space-between;
width: 96px;
height: 30px;
margin: 0 2px;
padding: 0 3px 0 15px;
border-radius: 15px;
background: #0067c0;
font-size: 11px;
font-weight: 500;
`

// document header
const Header = styled.header`
display: flex;
align-items: center;
height: 65px;
flex: none;
padding: 0 20px 0 21px;
background: #f9fbfd;
`
const TitleBlock = styled.div`
margin-left: 7px;
`
const TitleRow = styled.div`
display: flex;
align-items: center;
height: 26px;
`
const Title = styled.h1`
margin: 0 17px 0 7px;
font-size: 18px;
font-weight: 400;
color: #1f1f1f;
`
const TitleButton = styled.button`
${centered}
width: 32px;
height: 24px;
color: #444746;
`
const Menus = styled.nav`
display: flex;
height: 24px;
margin-left: -2px;
`
const MenuButton = styled.button`
padding: 0 9px;
font-size: 14px;
color: #1f1f1f;
`
const Actions = styled.div`
display: flex;
align-items: center;
height: 60px;
align-self: flex-start;
margin-left: auto;
`
const ActionButton = styled.button`
${centered}
gap: 8px;
width: ${props => props.$wide ? '77px' : '49px'};
height: 40px;
color: #444746;
`
const Share = styled.button`
${centered}
gap: 8px;
height: 40px;
margin: 0 20px 0 5px;
padding: 0 26px 0 19px;
border-radius: 20px;
background: #c2e7ff;
font-size: 15px;
font-weight: 500;
color: #1a3348;
`
const Avatar = styled.button`
width: 32px;
height: 32px;
border-radius: 50%;
background: #8d6e63;
font-size: 16px;
color: #fff;
`

// toolbar
const ToolbarWrap = styled.div`
flex: none;
padding: 0 16px 8px;
background: #f9fbfd;
`
const Tools = styled.div`
display: flex;
align-items: center;
height: 40px;
padding: 0 12px 0 10px;
border-radius: 20px;
background: #edf2fa;
color: #444746;
`
const Tool = styled.button`
${centered}
gap: ${props => props.$off ? '8px' : '4px'};
flex: none;
width: ${props => props.$width || 32}px;
height: 28px;
font-size: ${props => props.$small ? '12px' : '13px'};
color: ${props => props.$off ? '#b4b8be' : '#444746'};
`
const CollapseTool = styled(Tool)`
margin-left: auto;
`
const Decimal = styled.span`
display: flex;
flex-direction: column;
align-items: flex-end;
font-size: 14px;
line-height: 12px;
font-weight: 500;
`
const Picker = styled.div`
display: grid;
align-items: center;
flex: none;
width: ${props => props.$width}px;
select {
  grid-area: 1 / 1;
  width: 100%;
  height: 28px;
  padding-left: ${props => props.$width > 80 ? '12px' : '8px'};
  appearance: none;
  font-size: 14px;
}
svg {
  grid-area: 1 / 1;
  justify-self: end;
  margin-right: 11px;
  pointer-events: none;
}
`
const Divider = styled.span`
flex: none;
width: 1px;
height: 20px;
margin: 0 3px;
background: #c7cace;
`
const FontSize = styled.input`
width: 34px;
height: 24px;
margin: 0 2px;
border: 1px solid #747775;
border-radius: 4px;
text-align: center;
font-size: 14px;
`
const ColorMark = styled.span`
display: flex;
flex-direction: column;
align-items: center;
justify-content: flex-end;
width: 23px;
height: 22px;
border-bottom: 4px solid ${props => props.$color};
font-size: 15px;
line-height: 18px;
`

// formula bar
const Formula = styled.div`
display: flex;
align-items: center;
height: 28px;
flex: none;
background: #fff;
`
const NameBox = styled.input`
width: 80px;
padding-left: 14px;
font-size: 13px;
color: #1f1f1f;
`
const NameArrow = styled.button`
${centered}
width: 20px;
height: 20px;
`
const FormulaLabel = styled.label`
margin-left: 6px;
padding-left: 12px;
border-left: 1px solid #c7cace;
font: italic bold 16px/18px "Liberation Serif", serif;
color: #9aa0a6;
`
const FormulaInput = styled.input`
flex: 1;
height: 24px;
margin-left: 8px;
font-size: 13px;
`

// grid
const GridArea = styled.main`
display: grid;
grid-template-columns: minmax(0, 1fr) 12px;
grid-template-rows: minmax(0, 1fr) 14px;
flex: 1;
min-height: 0;
border-top: 1px solid #c0c0c0;
`
const SheetView = styled.div`
overflow: hidden;
`
const Table = styled.table`
width: 1370px;
table-layout: fixed;
border-collapse: separate;
border-spacing: 0;
`
const Col = styled.col`
width: ${props => props.$width}px;
`
const Corner = styled.th`
height: 24px;
padding: 0;
background: #f8f9fa;
border-right: 5px solid #c0c0c0;
border-bottom: 5px solid #c0c0c0;
`
const ColumnHead = styled.th`
height: 24px;
padding: 0;
background: ${props => props.$selected ? '#d3e3fd' : '#fff'};
border-right: 1px solid #c0c0c0;
border-bottom: 1px solid #c0c0c0;
font-size: 11px;
font-weight: 400;
color: #444746;
`
const Row = styled.tr`
height: ${props => props.$empty ? '21px' : '24px'};
`
const RowHead = styled.th`
padding: 0;
border-right: 1px solid #c0c0c0;
border-bottom: 1px solid #c0c0c0;
font-size: 11px;
line-height: 16px;
font-weight: 400;
color: #444746;
`
const Cell = styled.td`
padding: 0 3px;
border-right: 1px solid #e1e1e1;
border-bottom: 1px solid #e1e1e1;
font-family: "Liberation Sans", Arial, sans-serif;
font-size: 16px;
line-height: 20px;
white-space: nowrap;
color: #000;
`
const VerticalScroll = styled.div`
display: flex;
flex-direction: column;
border-left: 1px solid #dadce0;
`
const ScrollCap = styled.div`
height: 24px;
background: #f8f9fa;
border-bottom: 1px solid #dadce0;
`
const VerticalTrack = styled.div`
flex: 1;
padding: 21px 1px 0;
`
const VerticalThumb = styled.div`
height: 26px;
border-radius: 5px;
background: #dadce0;
`
const HorizontalScroll = styled.div`
display: flex;
border-top: 1px solid #dadce0;
border-bottom: 1px solid #dadce0;
`
const HorizontalCap = styled.div`
width: 46px;
background: #f8f9fa;
border-right: 1px solid #dadce0;
`
const HorizontalTrack = styled.div`
flex: 1;
padding: 1px;
`
const HorizontalThumb = styled.div`
width: 40%;
height: 9px;
border-radius: 5px;
background: #dadce0;
`
const ScrollButton = styled.button`
${centered}
width: ${props => props.$side ? '16px' : '100%'};
height: ${props => props.$side ? '100%' : '16px'};
background: #f8f9fa;
border-top: ${props => props.$side ? '0' : '1px solid #dadce0'};
border-left: ${props => props.$side ? '1px solid #dadce0' : '0'};
`
const Triangle = styled.span`
border: 3px solid transparent;
border-top-width: 0;
border-bottom: 4px solid #888;
transform: rotate(${props => props.$turn || 0}deg);
`
const ScrollCorner = styled.div`
background: #f8f9fa;
border: 1px solid #dadce0;
border-right: 0;
`

// sheet tabs
const SheetBar = styled.div`
display: flex;
align-items: center;
height: 36px;
flex: none;
padding: 0 8px 0 42px;
background: #f9fbfd;
`
const SheetTool = styled.button`
${centered}
width: 40px;
height: 36px;
color: #444746;
`
const SheetList = styled.div`
display: flex;
height: 100%;
margin-left: 12px;
`
const SheetTab = styled.button`
display: flex;
align-items: center;
gap: 12px;
padding: 2px 14px 0 12px;
background: ${props => props.$active ? '#e1e9f7' : 'none'};
font-size: 15px;
font-weight: ${props => props.$active ? 700 : 400};
color: ${props => props.$active ? '#1a56c8' : '#444746'};
`
const SheetEnd = styled.div`
display: flex;
gap: 17px;
margin-left: auto;
`

// taskbar
const TaskbarWrap = styled.footer`
display: flex;
height: 40px;
flex: none;
background: linear-gradient(90deg, #cde5ed, #cfe3ec 50%, #d3dfec 75%, #d3d9e9);
color: #1a1a1a;
${edgeFont}
`
const StartButton = styled.button`
${centered}
width: 48px;
`
const Search = styled.label`
display: flex;
align-items: center;
width: 288px;
height: 40px;
padding: 0 2px 0 11px;
border: 1px solid #b8c4c9;
background: #fff;
input {
  flex: 1;
  min-width: 0;
  margin-left: 10px;
  font-size: 13px;
}
input::placeholder {
  color: #333;
  opacity: 1;
}
`
const TaskView = styled.button`
${centered}
width: 51px;
padding-right: 3px;
`
const Task = styled.button`
${centered}
width: 49px;
background: ${props => props.$open ? 'linear-gradient(#0078d7, #0078d7) 50% 100% / 40px 2px no-repeat' : 'none'};
`
const ActiveTask = styled(Task)`
background:
  linear-gradient(90deg, #0078d7 45px, #62a4d3 45px) 0 100% / 48px 2px no-repeat,
  linear-gradient(90deg, #edf6f9 44px, #9dbfcf 44px 45px, #bfdae5 45px) 0 0 / 48px 100% no-repeat;
`
const Tray = styled.div`
display: flex;
align-items: center;
margin-left: auto;
margin-right: 3px;
border-right: 1px solid #a9b0bd;
`
const Weather = styled.button`
display: flex;
align-items: center;
gap: 9px;
margin-right: 19px;
font-size: 13px;
`
const TrayButton = styled.button`
${centered}
width: 24px;
height: 40px;
`
const Clock = styled.time`
display: flex;
flex-direction: column;
align-items: center;
width: 70px;
font-size: 11px;
line-height: 18px;
`
const Notifications = styled.button`
display: flex;
align-items: center;
position: relative;
width: 49px;
height: 40px;
padding-left: 12px;
`
const Badge = styled.span`
position: absolute;
left: 20px;
top: 18px;
width: 17px;
height: 17px;
border: 1px solid #777;
border-radius: 50%;
background: #d5d5d8;
font-size: 11px;
line-height: 15px;
`

export default App;
